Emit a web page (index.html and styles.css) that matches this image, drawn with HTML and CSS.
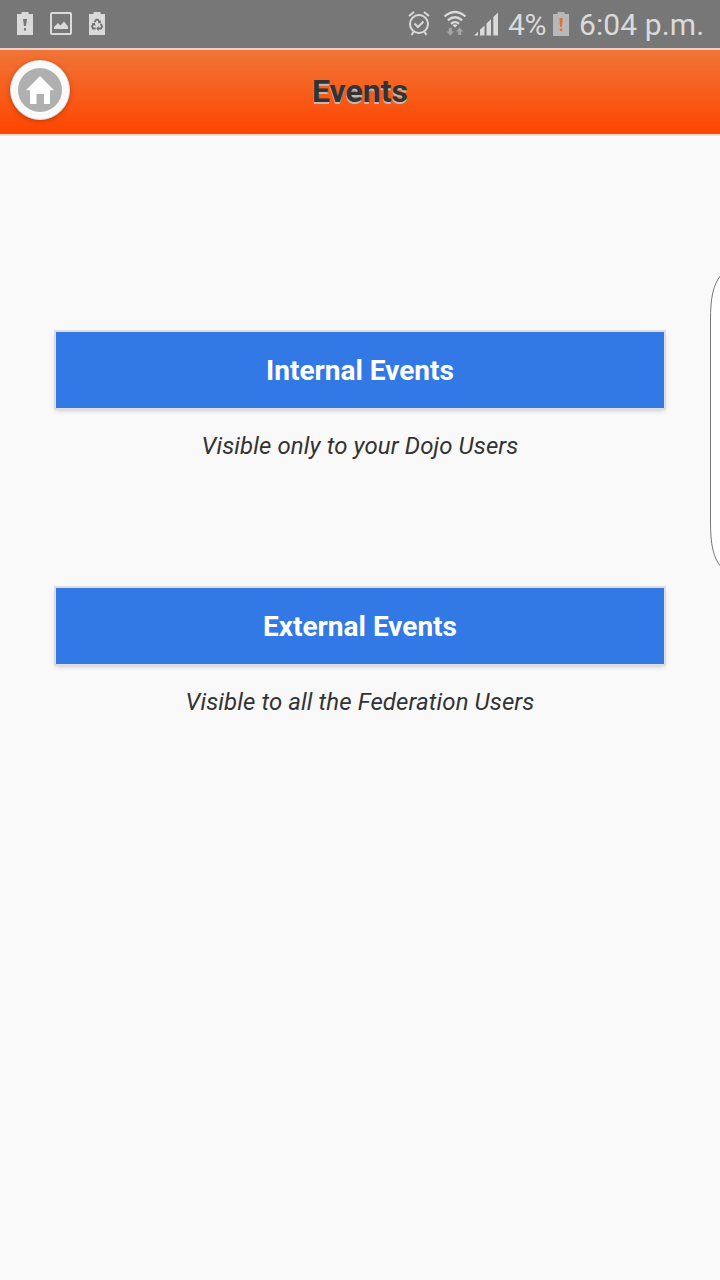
FILE: index.html
```html
<!DOCTYPE html>
<html lang="en">
<head>
<meta charset="utf-8">
<title>Events</title>
<link rel="stylesheet" href="styles.css">
</head>
<body>
<div class="status-bar">
  <div class="notifications">
    <svg width="16" height="23" viewBox="0 0 16 23"><path fill="#dadada" fill-rule="evenodd" d="M4.500 0h7v2H16v21H0V2h4.500zM6 7l1 7h2l1-7zM7 16v2.500h2V16z"/></svg>
    <svg width="22" height="23" viewBox="0 0 22 23"><rect x="1" y="1" width="20" height="21" rx="1" fill="none" stroke="#dadada" stroke-width="2"/><path fill="#dadada" d="M4 17v-2l4-4 2.500 2.500L14 9.500l4 5V17z"/></svg>
    <svg width="16" height="23" viewBox="0 0 16 23"><path fill="#dadada" d="M4.500 0h7v2H16v21H0V2h4.500z"/><g fill="none" stroke="#707070" stroke-width="1.800"><path d="M5.500 10 7.300 7.600h1.500l1.600 2.300M11.800 12l1.300 2.600-1 1.900H9M6.700 16.500H4l-1-1.900L4.500 12"/></g><path fill="#707070" d="M11.800 8v3.300H8.600zM9.800 14v5L7.200 16.500zM2.600 11.500l3.200-.8.800 3.200z"/></svg>
  </div>
  <div class="system">
    <svg width="22" height="26" viewBox="0 0 22 26" fill="none" stroke="#dadada" stroke-width="2"><circle cx="11" cy="13" r="9"/><path d="m6.500 12.500 3.500 3.500 5.500-5.500M1 5 6 1M21 5l-5-4M5.500 21l-2 3M16.500 21l2 3"/></svg>
    <svg class="wifi" width="24" height="26" viewBox="0 0 24 26"><g fill="none" stroke="#dadada" stroke-width="2.300"><path d="M1.500 6.500q10.500-9 21 0M4.800 10.300q7.200-6 14.400 0M8 13.800q4-3.300 8 0"/></g><path fill="#dadada" d="m9.500 15 2.500 2.800 2.500-2.800q-2.500-1.600-5 0z"/><path fill="#a6a6a6" d="M5.800 18h3v3.500H11l-3.700 4.200-3.700-4.200h2.200zM15.200 25v-3.500H13l3.700-4 3.700 4h-2.200V25z"/></svg>
    <svg class="signal" width="25" height="25" viewBox="0 0 25 25" fill="#dadada"><path d="M0 24.500 4 20.700v3.800zM6 18.800l4.500-4.300v10H6zM12.500 12.600 17 8.300v16.200h-4.500zM19.300 6.100 24 1.500v23h-4.700z"/></svg>
    <span class="percent">4%</span>
    <svg class="battery" width="17" height="24" viewBox="0 0 17 24"><path fill="#b8b8b8" d="M4.500 0h7v2H16v22H0V2h4.500z"/><path fill="#d8753c" d="M6.300 6h3.400l-.7 9H7zM6.800 16.500h2.400V19H6.800z"/></svg>
    <span class="clock">6:04 p.m.</span>
  </div>
</div>
<header class="header">
  <a class="home"><svg width="44" height="44" viewBox="0 0 44 44"><circle cx="22" cy="22" r="22" fill="#b0b0b0"/><path fill="#fff" d="M22 8 36 22.300h-4V36h-6V26h-7.500v10H12V22.300H8z"/></svg></a>
  <h1 class="title">Events</h1>
</header>
<main class="content">
  <section class="choice">
    <button class="choice-button">Internal Events</button>
    <p class="hint">Visible only to your Dojo Users</p>
  </section>
  <section class="choice">
    <button class="choice-button">External Events</button>
    <p class="hint">Visible to all the Federation Users</p>
  </section>
</main>
<svg class="edge-handle" width="10" height="296" viewBox="0 0 10 296"><path d="M11 2C3 12 .5 25 .5 47v202c0 22 2.500 35 10.500 45" fill="#fff" stroke="#777"/></svg>
</body>
</html>
```
FILE: styles.css
```css
* { box-sizing: border-box; }
body {
  margin: 0;
  height: 1280px;
  overflow: hidden;
  position: relative;
  background: #f9f9f9;
  font-family: Roboto, sans-serif;
}
svg { display: block; flex: none; }
.status-bar {
  height: 48px;
  padding: 0 16px 0 17px;
  display: flex;
  justify-content: space-between;
  background: #777;
  color: #dadada;
  font-size: 30px;
  line-height: 50px;
}
.notifications { display: flex; gap: 17px; padding-top: 12px; }
.system { display: flex; white-space: nowrap; }
.system svg { margin-top: 11px; }
.system .wifi { margin-left: 13px; margin-top: 10px; }
.system .signal { margin-left: 7px; }
.percent { margin-left: 9px; width: 39px; letter-spacing: -0.4px; }
.system .battery { margin-left: 6px; margin-top: 12px; }
.clock { margin-left: 9px; width: 125px; letter-spacing: 0.1px; }
.header {
  height: 88px;
  border-top: 2px solid #efd1c8;
  border-bottom: 2px solid #fbd9ce;
  background: linear-gradient(#f07537, #ff4500) padding-box;
  display: grid;
  grid-template-columns: 60px 1fr 60px;
  padding: 0 10px;
}
.home {
  width: 60px;
  height: 60px;
  margin-top: 10px;
  border: 1px solid #ddd;
  border-radius: 50%;
  background: #fafafa;
  display: grid;
  place-items: center;
  box-shadow: 0 1px 5px rgba(0, 0, 0, 0.25);
}
.title {
  margin: 0;
  text-align: center;
  font-size: 32px;
  line-height: 82px;
  font-weight: 700;
  color: #333;
  text-shadow: 0 2px 0 #bbb;
}
.content {
  padding: 196px 56px 0;
  display: flex;
  flex-direction: column;
  gap: 120px;
}
.choice { height: 136px; }
.choice-button {
  display: block;
  width: 100%;
  height: 76px;
  padding: 2px 0 0;
  border: 0;
  background: #3279e6;
  box-shadow: 0 0 0 2px #dcdde3, 0 2px 5px rgba(0, 0, 0, 0.25);
  color: #fff;
  font: 700 28px/74px Roboto, sans-serif;
}
.hint {
  margin: 20px 0 0;
  text-align: center;
  color: #333;
  font-size: 24px;
  line-height: 36px;
  letter-spacing: 0.1px;
  font-style: italic;
}
.edge-handle { position: absolute; top: 273px; right: 0; }
```
